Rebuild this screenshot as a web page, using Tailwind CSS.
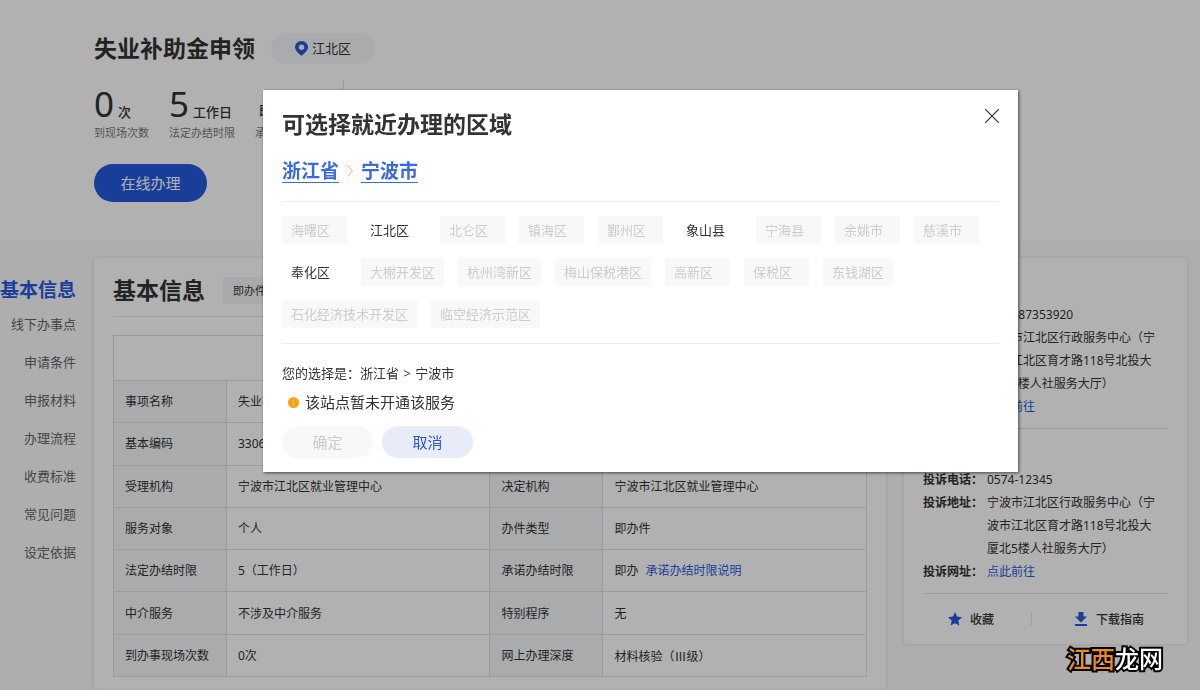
<!DOCTYPE html>
<html lang="zh-CN">
<head>
<meta charset="utf-8">
<meta name="viewport" content="width=device-width, initial-scale=1">
<title>失业补助金申领</title>
<script src="https://cdn.jsdelivr.net/npm/@tailwindcss/browser@4"></script>
</head>
<body class="h-screen overflow-hidden bg-[#f9f9f9] font-['Noto_Sans','Noto_Sans_CJK_SC',sans-serif] text-[12px] leading-[23px] text-[#333]">

<header class="h-[240px] bg-[#fefefe] pt-[31px] pl-[94px]">
  <div class="flex items-center gap-4">
    <h1 class="text-[23px] leading-[34px] font-bold">失业补助金申领</h1>
    <button class="flex h-[31px] items-center gap-1 rounded-full bg-[#f4f5f7] px-6 text-[13px]">
      <svg class="h-[15px] w-[13px]" viewBox="0 0 13 15" fill="#255add"><path fill-rule="evenodd" d="M6.500 0A6.500 6.200 0 0 0 0 6.200C0 10 4.500 12.500 6.500 15C8.500 12.500 13 10 13 6.200A6.500 6.200 0 0 0 6.500 0ZM6.500 3.500A2.700 2.700 0 1 1 6.500 8.900A2.700 2.700 0 0 1 6.500 3.500Z"/></svg>
      江北区
    </button>
  </div>
  <div class="mt-4 flex">
    <dl class="flex gap-[20px]">
      <div>
        <dd class="flex h-[43px] items-baseline gap-1 text-[13px] font-medium"><span class="text-[35px] leading-[46px] font-normal">0</span>次</dd>
        <dt class="text-[11px] leading-[18px] text-[#777]">到现场次数</dt>
      </div>
      <div>
        <dd class="flex h-[43px] items-baseline gap-1 text-[13px] font-medium"><span class="text-[35px] leading-[46px] font-normal">5</span>工作日</dd>
        <dt class="text-[11px] leading-[18px] text-[#777]">法定办结时限</dt>
      </div>
      <div>
        <dd class="flex h-[43px] items-baseline pl-1 text-[13px] leading-[46px] font-medium"><span class="pt-[6px]">即办</span></dd>
        <dt class="text-[11px] leading-[18px] text-[#777]">承诺办结时限</dt>
      </div>
    </dl>
    <div class="ml-[22px] h-[50px] border-l border-[#ddd]"></div>
  </div>
  <button class="mt-[22px] h-[38px] w-[113px] rounded-full bg-[#255add] text-[15px] text-white">在线办理</button>
</header>

<main class="flex items-start pt-[18px] pr-[13px]">
  <nav class="flex w-[94px] shrink-0 flex-col items-end pt-[17px] pr-[18px] text-[13px] leading-[38px] whitespace-nowrap text-[#666]" aria-label="目录">
    <a href="#" class="text-[19px] leading-[30px] font-bold text-[#255add]">基本信息</a>
    <a href="#">线下办事点</a>
    <a href="#">申请条件</a>
    <a href="#">申报材料</a>
    <a href="#">办理流程</a>
    <a href="#">收费标准</a>
    <a href="#">常见问题</a>
    <a href="#">设定依据</a>
  </nav>

  <section class="min-w-0 flex-1 rounded bg-[#fefefe] px-[19px] pb-3 shadow-[0_0_4px_rgba(0,0,0,0.12)]">
    <div class="flex h-[59px] items-center gap-[18px] border-b border-[#e2e2e2] pt-[6px]">
      <h2 class="text-[23px] leading-[34px] font-bold">基本信息</h2>
      <span class="bg-[#f1f3f5] px-[10px] py-[2px] text-[11px]">即办件</span>
    </div>
    <table class="mt-[18px] h-[342px] w-full table-fixed border-collapse text-left [&_td]:border [&_td]:border-[#dddfe1] [&_td]:px-[11px] [&_th]:border [&_th]:border-[#dddfe1] [&_th]:bg-[#f2f5f8] [&_th]:px-[11px] [&_th]:font-normal">
      <colgroup><col class="w-[15%]"><col class="w-[35%]"><col class="w-[15%]"><col class="w-[35%]"></colgroup>
      <tbody>
        <tr class="h-[45px]"><td colspan="4"></td></tr>
        <tr><th scope="row">事项名称</th><td>失业补助金申领</td><th></th><td></td></tr>
        <tr><th scope="row">基本编码</th><td>3306</td><th></th><td></td></tr>
        <tr><th scope="row">受理机构</th><td>宁波市江北区就业管理中心</td><th scope="row">决定机构</th><td>宁波市江北区就业管理中心</td></tr>
        <tr><th scope="row">服务对象</th><td>个人</td><th scope="row">办件类型</th><td>即办件</td></tr>
        <tr><th scope="row">法定办结时限</th><td>5（工作日）</td><th scope="row">承诺办结时限</th><td>即办 <a href="#" class="ml-1 text-[#255add]">承诺办结时限说明</a></td></tr>
        <tr><th scope="row">中介服务</th><td>不涉及中介服务</td><th scope="row">特别程序</th><td>无</td></tr>
        <tr><th scope="row">到办事现场次数</th><td>0次</td><th scope="row">网上办理深度</th><td class="font-['Noto_Sans_CJK_SC',sans-serif]">材料核验（Ⅲ级）</td></tr>
      </tbody>
    </table>
  </section>

  <aside class="ml-[18px] w-[283px] shrink-0 rounded bg-[#fefefe] px-[19px] shadow-[0_0_4px_rgba(0,0,0,0.12)]">
    <dl class="grid grid-cols-[64px_1fr] border-b border-[#ddd] pt-[45px] pb-[10px]">
      <dt class="font-bold">咨询电话：</dt><dd>0574-87353920</dd>
      <dt class="font-bold">咨询地址：</dt><dd class="pr-2">宁波市江北区行政服务中心（宁波市江北区育才路118号北投大厦北5楼人社服务大厅）</dd>
      <dt class="font-bold">咨询网址：</dt><dd><a href="#" class="text-[#255add]">点此前往</a></dd>
    </dl>
    <dl class="grid grid-cols-[64px_1fr] border-b border-[#ddd] pt-[39px] pb-[10px]">
      <dt class="font-bold">投诉电话：</dt><dd>0574-12345</dd>
      <dt class="font-bold">投诉地址：</dt><dd class="pr-2">宁波市江北区行政服务中心（宁波市江北区育才路118号北投大厦北5楼人社服务大厅）</dd>
      <dt class="font-bold">投诉网址：</dt><dd><a href="#" class="text-[#255add]">点此前往</a></dd>
    </dl>
    <div class="flex h-[50px] items-center font-medium">
      <button class="flex flex-1 items-center gap-2 pl-[25px]">
        <svg class="size-[14px]" viewBox="0 0 14 14" fill="#255add"><path d="M7 0L9.100 4.600L14 5.200L10.400 8.600L11.300 13.600L7 11.200L2.700 13.600L3.600 8.600L0 5.200L4.900 4.600Z"/></svg>
        收藏
      </button>
      <div class="h-[14px] border-l border-[#e2e2e2]"></div>
      <button class="flex items-center gap-2 pr-6 pl-[42px]">
        <svg class="size-[14px]" viewBox="0 0 14 14" fill="#255add"><path d="M4.500 0H9.500V4.500H13L7 10.500L1 4.500H4.500ZM1 12H13V14H1Z"/></svg>
        下载指南
      </button>
    </div>
  </aside>
</main>

<div class="fixed inset-0 flex items-start justify-center bg-black/30 pt-[90px] pl-[81px]">
  <div role="dialog" aria-modal="true" aria-labelledby="dialog-title" class="w-[755px] bg-white px-[19px] pt-[17px] pb-[14px] text-[13px] shadow-[1px_1px_3px_rgba(0,0,0,0.6)]">
    <div class="flex items-center justify-between">
      <h2 id="dialog-title" class="text-[23px] leading-[34px] font-bold">可选择就近办理的区域</h2>
      <button class="mt-[-16px]" aria-label="关闭">
        <svg class="size-[14px]" viewBox="0 0 14 14" fill="none" stroke="#333" stroke-width="1.200"><path d="M0 0L14 14M14 0L0 14"/></svg>
      </button>
    </div>
    <div class="mt-[19px] flex h-[42px] items-start border-b border-[#ebebeb] text-[19px] leading-[22px] font-bold text-[#3a6add]">
      <a href="#" class="border-b border-[#3a6add]">浙江省</a>
      <svg class="mx-2 mt-[5px] h-[12px] w-[6px]" viewBox="0 0 6 12" fill="none" stroke="#bbb"><path d="M0.500 0.500L5.500 6L0.500 11.500"/></svg>
      <a href="#" class="border-b border-[#3a6add]">宁波市</a>
    </div>
    <div class="flex flex-wrap gap-[14px] border-b border-[#ebebeb] pt-[14px] pb-[15px] [&>button]:h-[28px] [&>button]:min-w-[65px] [&>button]:px-[9px] [&>button]:text-left [&>button]:disabled:bg-[#f8f8f8] [&>button]:disabled:text-[#ccc]">
      <button disabled>海曙区</button>
      <button>江北区</button>
      <button disabled>北仑区</button>
      <button disabled>镇海区</button>
      <button disabled>鄞州区</button>
      <button>象山县</button>
      <button disabled>宁海县</button>
      <button disabled>余姚市</button>
      <button disabled>慈溪市</button>
      <button>奉化区</button>
      <button disabled>大榭开发区</button>
      <button disabled>杭州湾新区</button>
      <button disabled>梅山保税港区</button>
      <button disabled>高新区</button>
      <button disabled>保税区</button>
      <button disabled>东钱湖区</button>
      <button disabled>石化经济技术开发区</button>
      <button disabled>临空经济示范区</button>
    </div>
    <p class="mt-[18px]">您的选择是：浙江省 <span class="mx-px">&gt;</span> 宁波市</p>
    <p class="mt-[5px] flex items-center gap-[6px] pl-[6px] text-[15px] leading-[24px]">
      <svg class="size-[11px]" viewBox="0 0 11 11"><circle cx="5.500" cy="5.500" r="5.500" fill="#fba30f"/><path d="M5.500 2.500V6.300M5.500 7.300V8.500" stroke="#ffe08a" stroke-width="1.200"/></svg>
      该站点暂未开通该服务
    </p>
    <div class="mt-3 flex gap-[9px] text-[15px]">
      <button disabled class="h-[32px] w-[91px] rounded-full bg-[#f8f8f8] text-[#ccc]">确定</button>
      <button class="h-[32px] w-[91px] rounded-full bg-[#e8ecf8] text-[#2f56c5]">取消</button>
    </div>
  </div>
</div>

<div class="fixed right-[37px] bottom-[15px] text-[24px] leading-[32px] font-medium text-white [-webkit-text-stroke:4px_#000] [paint-order:stroke_fill]"><span class="text-[#f08c1c]">江西</span>龙网</div>
</body>
</html>
